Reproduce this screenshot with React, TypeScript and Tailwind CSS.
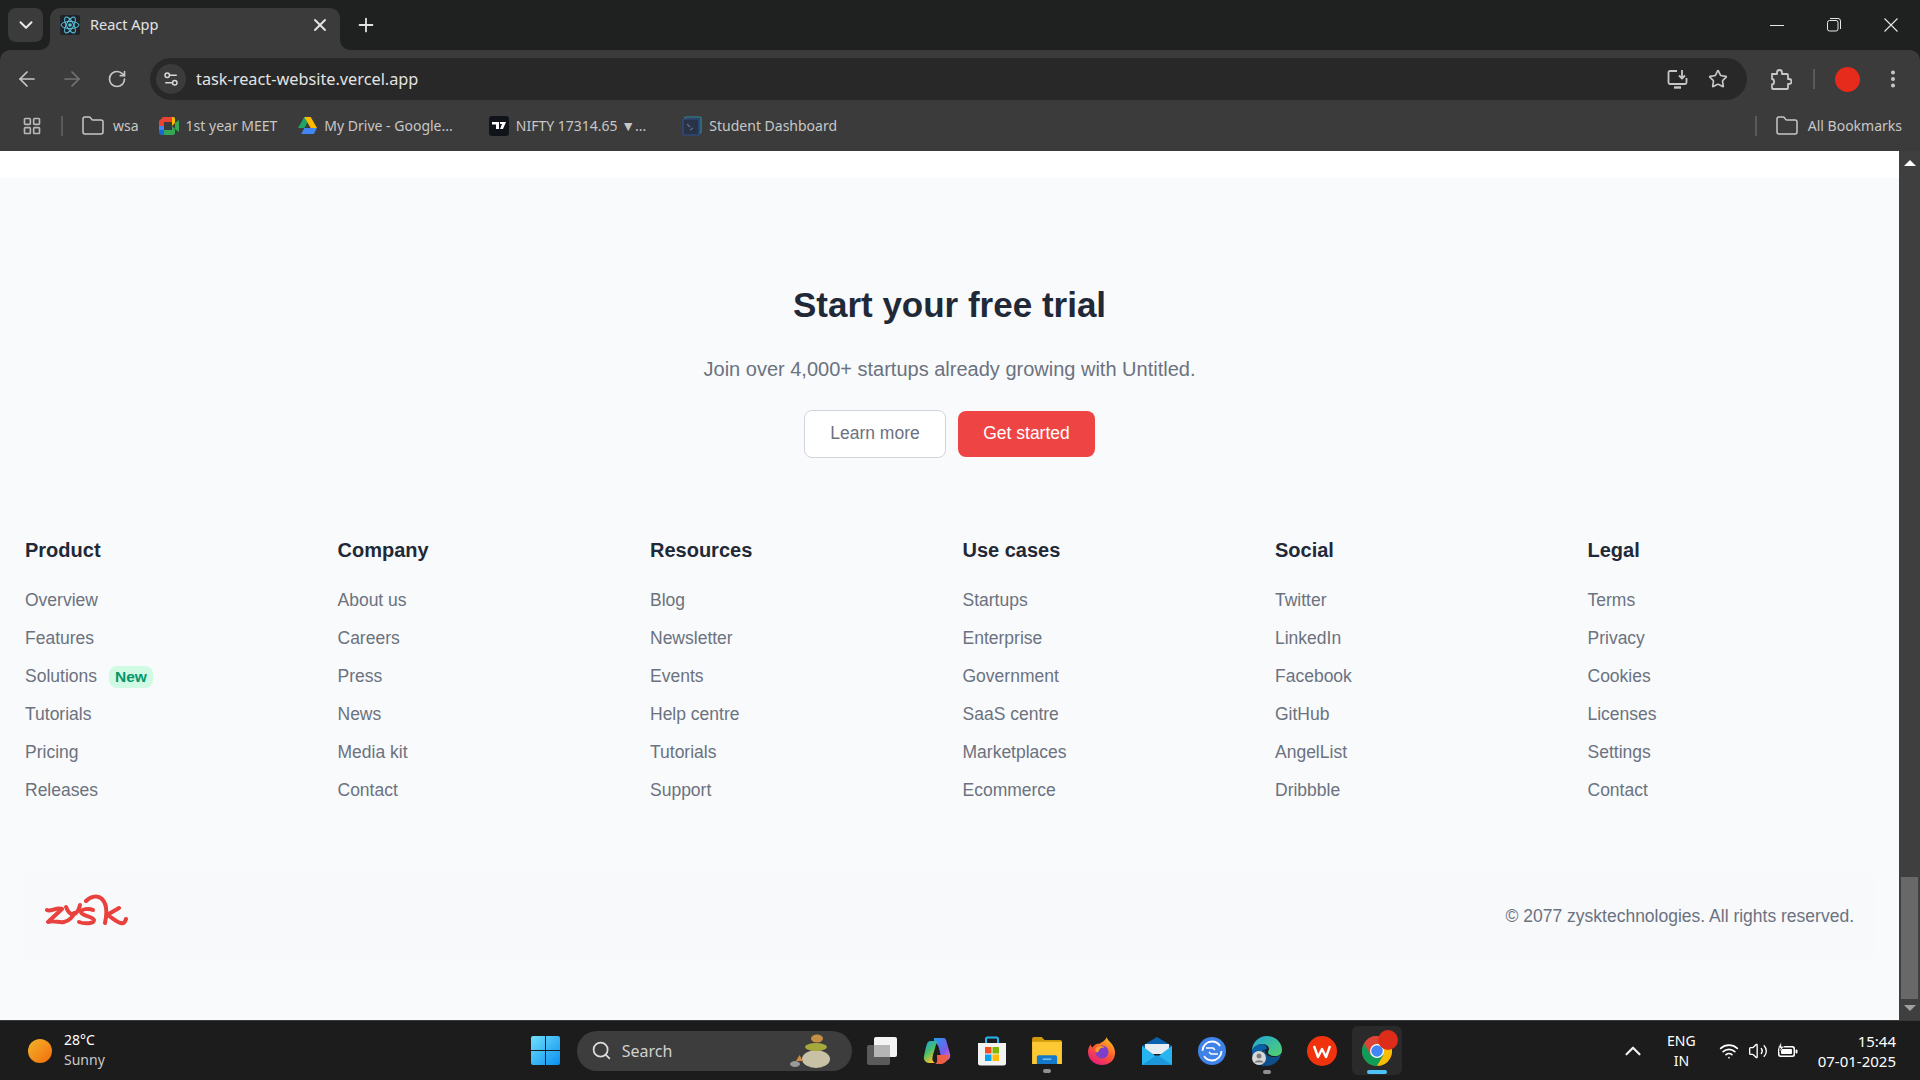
import {
  ArrowLeft,
  ArrowRight,
  ChevronDown,
  ChevronUp,
  EllipsisVertical,
  Folder,
  LayoutGrid,
  Plus,
  RotateCw,
  Search,
  Settings2,
  Star,
  Volume2,
  Wifi,
  X,
} from "lucide-react";

const columns = [
  { title: "Product", links: ["Overview", "Features", "Solutions", "Tutorials", "Pricing", "Releases"] },
  { title: "Company", links: ["About us", "Careers", "Press", "News", "Media kit", "Contact"] },
  { title: "Resources", links: ["Blog", "Newsletter", "Events", "Help centre", "Tutorials", "Support"] },
  { title: "Use cases", links: ["Startups", "Enterprise", "Government", "SaaS centre", "Marketplaces", "Ecommerce"] },
  { title: "Social", links: ["Twitter", "LinkedIn", "Facebook", "GitHub", "AngelList", "Dribbble"] },
  { title: "Legal", links: ["Terms", "Privacy", "Cookies", "Licenses", "Settings", "Contact"] },
];

function ReactIcon() {
  return (
    <svg width="20" height="20" viewBox="0 0 20 20" fill="none" stroke="#58c4dc" strokeWidth="1">
      <rect width="20" height="20" rx="2" fill="#20232a" stroke="none" />
      <circle cx="10" cy="10" r="1.8" fill="#58c4dc" stroke="none" />
      <ellipse cx="10" cy="10" rx="9" ry="3.5" />
      <ellipse cx="10" cy="10" rx="9" ry="3.5" transform="rotate(60 10 10)" />
      <ellipse cx="10" cy="10" rx="9" ry="3.5" transform="rotate(120 10 10)" />
    </svg>
  );
}

function MeetIcon() {
  return (
    <svg width="20" height="18" viewBox="0 0 20 18">
      <path d="M4 0h9v5H5v4H0V4z" fill="#ea4335" />
      <path d="M0 9h5v4H0z" fill="#4285f4" />
      <path d="M0 13h5v5H3a3 3 0 0 1-3-3z" fill="#1967d2" />
      <path d="M5 13h8v5H5z" fill="#34a853" />
      <path d="M13 0h1a2 2 0 0 1 2 2v4l-3 3z" fill="#fbbc04" />
      <path d="M13 9l3 3v4a2 2 0 0 1-2 2h-1z" fill="#34a853" />
      <path d="M16 6l4-3v12l-4-3z" fill="#34a853" />
      <path d="M5 5h8v8H5z" fill="#3b3b3b" />
    </svg>
  );
}

function DriveIcon() {
  return (
    <svg width="19" height="17" viewBox="0 0 19 17">
      <path d="M6.3 0h6.4l-6.3 11H0z" fill="#1fa463" />
      <path d="M12.7 0L19 11h-6.3L6.3 0z" fill="#ffba00" />
      <path d="M3.2 17L6.4 11H19l-3.2 6z" fill="#4285f4" />
    </svg>
  );
}

function TradingViewIcon() {
  return (
    <svg width="20" height="20" viewBox="0 0 20 20">
      <rect width="20" height="20" rx="3" fill="#10131a" />
      <path d="M3 6h7v7H7V8.5H3zM11 6h6l-3 7h-3l2-5h-2z" fill="#fff" />
    </svg>
  );
}

function StudentIcon() {
  return (
    <svg width="20" height="20" viewBox="0 0 20 20" fill="none">
      <rect x="3" y="1" width="16" height="16" rx="1" stroke="#2b8a9b" strokeWidth="1.2" />
      <rect x="1" y="3" width="16" height="16" rx="1" fill="#2a3346" stroke="#2c4f93" strokeWidth="1.2" />
      <path d="M5 8l3 3M8 14l3-2" stroke="#5b6b85" strokeWidth="1.4" />
    </svg>
  );
}

function InstallIcon() {
  return (
    <svg width="22" height="20" viewBox="0 0 22 20" fill="none" stroke="#c7c7c7" strokeWidth="1.8">
      <path d="M10 2H3a1.5 1.5 0 0 0-1.500 1.500v10A1.500 1.500 0 0 0 3 15h15a1.500 1.500 0 0 0 1.500-1.500V9" />
      <path d="M7 18.500h7" strokeWidth="2.400" />
      <path d="M15 1v8M12 6.500l3 3 3-3" />
    </svg>
  );
}

function ExtensionIcon() {
  return (
    <svg width="22" height="21" viewBox="0 0 22 21" fill="none" stroke="#c7c7c7" strokeWidth="1.800" strokeLinejoin="round">
      <path d="M2 5h5V3.500a2.500 2.500 0 0 1 5 0V5h5a1 1 0 0 1 1 1v4h1a2.500 2.500 0 0 1 0 5h-1v4a1 1 0 0 1-1 1H3a1 1 0 0 1-1-1v-3.500c2.800-.2 2.800-5.300 0-5.500z" />
    </svg>
  );
}

function WindowRestore() {
  return (
    <svg width="14" height="14" viewBox="0 0 14 14" fill="none" stroke="#e8e8e8" strokeWidth="1">
      <rect x="0.500" y="2.500" width="10.500" height="10.500" rx="2" />
      <path d="M3 .5h8a2.500 2.500 0 0 1 2.500 2.500v8" />
    </svg>
  );
}

function WindowClose() {
  return (
    <svg width="14" height="14" viewBox="0 0 14 14" fill="none" stroke="#e8e8e8" strokeWidth="1.100">
      <path d="M.5.5l13 13M13.500.5l-13 13" />
    </svg>
  );
}

function TabCorner({ flip }: { flip?: boolean }) {
  return (
    <svg width="10" height="10" viewBox="0 0 10 10" className={flip ? "absolute bottom-0 -left-[10px] -scale-x-100" : "absolute bottom-0 -right-[10px]"}>
      <path d="M0 0v10h10A10 10 0 0 1 0 0z" fill="#3b3b3b" />
    </svg>
  );
}

function ZyskLogo() {
  return (
    <svg width="84" height="32" viewBox="9 8 84 32" fill="none" stroke="#e8413e" strokeWidth="4" strokeLinecap="round" strokeLinejoin="round">
      <path d="M11 24c4 2 9-3 15-1L12 36c6-2 11 1 16 0 5-1 9-5 10-9" />
      <path d="M30 21c2 5 5 8 8 7 3-1 5-4 6-9" />
      <path d="M57 24c-4-2-12-1-12 2 0 4 12 4 13 8 0 4-10 4-15 2" />
      <path d="M50 15c5-5 12-6 16-2 5 5 5 15 3 24" />
      <path d="M83 22l-12 7c5 2 9 7 14 8 3 1 4-1 5-4" />
    </svg>
  );
}

function WindowsLogo() {
  return (
    <svg width="29" height="29" viewBox="0 0 29 29">
      <defs>
        <linearGradient id="win" x1="0" y1="0" x2="1" y2="1">
          <stop offset="0" stopColor="#6fe0fb" />
          <stop offset="1" stopColor="#0a8ff0" />
        </linearGradient>
      </defs>
      <path d="M0 2a2 2 0 0 1 2-2h12v14H0zM15 0h12a2 2 0 0 1 2 2v12H15zM0 15h14v14H2a2 2 0 0 1-2-2zM15 15h14v12a2 2 0 0 1-2 2H15z" fill="url(#win)" />
    </svg>
  );
}

function StonesIcon() {
  return (
    <svg width="42" height="36" viewBox="0 0 42 36">
      <ellipse cx="26" cy="26" rx="14" ry="9" fill="#c9c1a6" />
      <ellipse cx="26" cy="14" rx="11" ry="4" fill="#a5a83c" />
      <ellipse cx="27" cy="5.500" rx="6" ry="4" fill="#c58f45" />
      <path d="M6 28l3.500-6 3.500 6z" fill="#d1893f" />
      <ellipse cx="5" cy="31" rx="5" ry="3" fill="#9a9a9a" />
    </svg>
  );
}

function TaskView() {
  return (
    <svg width="30" height="28" viewBox="0 0 30 28">
      <rect x="0" y="8" width="23" height="20" rx="2" fill="#5a5a5a" />
      <rect x="7" y="0" width="23" height="20" rx="2" fill="#f4f4f4" />
      <rect x="7" y="8" width="16" height="12" fill="#b5b5b5" />
    </svg>
  );
}

function CopilotIcon() {
  return (
    <svg width="28" height="28" viewBox="0 0 28 28">
      <defs>
        <linearGradient id="cpa" x1="0" y1="0" x2="1" y2="1">
          <stop offset="0" stopColor="#1f9ff0" />
          <stop offset="0.600" stopColor="#7a5ae8" />
          <stop offset="1" stopColor="#e86ad0" />
        </linearGradient>
        <linearGradient id="cpb" x1="0" y1="0" x2="0.500" y2="1">
          <stop offset="0" stopColor="#1f9ff0" />
          <stop offset="0.500" stopColor="#3fbf6e" />
          <stop offset="1" stopColor="#f5c02d" />
        </linearGradient>
      </defs>
      <path d="M11 1h9c3 0 3 2 4 5l3 11c1 4-2 7-5 7h-3l-3-13c-1-3-2-5-5-5z" fill="url(#cpa)" />
      <path d="M7 4h7l-4 14c-1 4-1 6 2 8H6c-3 0-6-3-5-7l2-9c1-4 2-6 4-6z" fill="url(#cpb)" />
      <path d="M14 18h12c-1 5-4 9-8 9h-6c3-1 2-5 2-9z" fill="#ef5f45" />
      <path d="M13 11h3l-3 7h-3z" fill="#1c1c1c" />
    </svg>
  );
}

function StoreIcon() {
  return (
    <svg width="30" height="30" viewBox="0 0 30 30" fill="none">
      <path d="M9 7V3a1.500 1.500 0 0 1 1.500-1.500h9A1.500 1.500 0 0 1 21 3v4" stroke="#29b6f2" strokeWidth="2" />
      <path d="M1 7h28v20a2.500 2.500 0 0 1-2.500 2.500h-23A2.500 2.500 0 0 1 1 27z" fill="#f3f3f3" />
      <rect x="8" y="11" width="6.500" height="6.500" fill="#f25022" />
      <rect x="15.500" y="11" width="6.500" height="6.500" fill="#7fba00" />
      <rect x="8" y="18.500" width="6.500" height="6.500" fill="#00a4ef" />
      <rect x="15.500" y="18.500" width="6.500" height="6.500" fill="#ffb900" />
    </svg>
  );
}

function ExplorerIcon() {
  return (
    <svg width="30" height="27" viewBox="0 0 31 28">
      <path d="M0 2a2 2 0 0 1 2-2h8l3 3h16a2 2 0 0 1 2 2v4H0z" fill="#d19a0b" />
      <path d="M0 5h31v23H0z" fill="#fcc934" />
      <path d="M5 21a2 2 0 0 1 2-2h17a2 2 0 0 1 2 2v7H5z" fill="#1479c9" />
      <path d="M11 23h9" stroke="#7cc6f2" strokeWidth="1.500" />
    </svg>
  );
}

function FirefoxIcon() {
  return (
    <svg width="28" height="28" viewBox="0 0 30 30">
      <defs>
        <linearGradient id="ffx" x1="0.800" y1="0" x2="0.200" y2="1">
          <stop offset="0" stopColor="#ffc220" />
          <stop offset="0.500" stopColor="#ff5a2e" />
          <stop offset="1" stopColor="#e31587" />
        </linearGradient>
      </defs>
      <path d="M20 0c1 4 4 5 6 8 3 5 4 9 2 14-2 5-7 8-13 8C7 30 0 24 0 16c0-3 1-6 3-8 0 2 1 3 2 3 2-3 5-4 8-4 2-2 6-3 7-7z" fill="url(#ffx)" />
      <circle cx="15" cy="16" r="7" fill="#7c3fc9" />
      <path d="M8 12c3-3 8-3 10 0-3-1-5 0-6 2-1 1 0 3-4 2z" fill="#ff9a26" />
    </svg>
  );
}

function MailIcon() {
  return (
    <svg width="30" height="28" viewBox="0 0 30 28">
      <path d="M15 0l15 9v5H0V9z" fill="#0b63b0" />
      <path d="M3 7h24v10H3z" fill="#e8edf2" />
      <path d="M0 9l15 11L30 9v19H0z" fill="#28b4ee" />
      <path d="M0 28l15-10 15 10z" fill="#1c97da" />
    </svg>
  );
}

function SyncIcon() {
  return (
    <svg width="28" height="28" viewBox="0 0 28 28" fill="none">
      <circle cx="14" cy="14" r="14" fill="#3f83e8" />
      <circle cx="14" cy="14" r="9.500" stroke="#fff" strokeWidth="1.800" strokeDasharray="24 6" />
      <path d="M8 11h7l2 2M20 17h-7l-2-2" stroke="#fff" strokeWidth="1.600" />
    </svg>
  );
}

function EdgeIcon() {
  return (
    <svg width="30" height="30" viewBox="0 0 30 30">
      <defs>
        <linearGradient id="edg" x1="0" y1="0" x2="1" y2="1">
          <stop offset="0" stopColor="#1fa6d8" />
          <stop offset="1" stopColor="#54d16b" />
        </linearGradient>
      </defs>
      <path d="M15 0c8 0 15 6 15 14 0 4-3 6-7 6-5 0-7-2-7-4 0-1 1-2 1-3 0-3-3-5-7-5C6 8 1 12 0 15 0 7 6 0 15 0z" fill="url(#edg)" />
      <path d="M0 15c1-4 5-7 10-7 3 0 5 2 5 5-3 0-7 3-7 8 0 3 2 7 6 9C6 30 0 23 0 15z" fill="#0b5fa5" />
      <path d="M14 30c-3-2-5-5-5-9 0-3 2-6 4-7 0 4 3 7 9 7 3 0 5-1 7-3-1 6-7 12-15 12z" fill="#0c4f8c" />
      <circle cx="7" cy="22" r="7" fill="#d8d8d8" />
      <circle cx="7" cy="20" r="2.500" fill="#7b7b7b" />
      <path d="M2.500 26.500c1-3 8-3 9 0z" fill="#7b7b7b" />
    </svg>
  );
}

function WpsIcon() {
  return (
    <svg width="30" height="30" viewBox="0 0 30 30" fill="none">
      <circle cx="15" cy="15" r="15" fill="#f0330c" />
      <path d="M7 10l4 11 4-8 4 8 4-11" stroke="#fff" strokeWidth="2.400" strokeLinejoin="round" />
    </svg>
  );
}

function ChromeIcon() {
  return (
    <svg width="30" height="30" viewBox="0 0 30 30">
      <circle cx="15" cy="15" r="15" fill="#db4437" />
      <path d="M15 30a15 15 0 0 0 13-22.500H15z" fill="#fbbc04" />
      <path d="M2 7.500A15 15 0 0 0 15 30l6.500-11.250L15 7.500H2z" fill="#0f9d58" />
      <path d="M2 7.500A15 15 0 0 1 28 7.500H15l-6.500 11.250z" fill="#db4437" />
      <circle cx="15" cy="15" r="7" fill="#fff" />
      <circle cx="15" cy="15" r="5.800" fill="#4285f4" />
    </svg>
  );
}

function BatteryIcon() {
  return (
    <svg width="21" height="17" viewBox="0 0 21 17" fill="none">
      <rect x="1" y="4" width="17" height="11" rx="2.500" fill="#fff" />
      <rect x="18.500" y="7.500" width="2" height="4" rx="1" fill="#fff" />
      <rect x="2.500" y="5.500" width="14" height="8" rx="1.500" fill="#1c1c1c" />
      <rect x="4" y="7" width="11" height="5" rx="1" fill="#fff" />
      <path d="M4 0L1 6h2.500L2.500 10 7 4.500H4.500z" fill="#fff" stroke="#1c1c1c" strokeWidth="0.600" />
    </svg>
  );
}

function Bookmark({ icon, label, className }: { icon: React.ReactNode; label: string; className: string }) {
  return (
    <div className={`flex items-center gap-[7px] ${className}`}>
      {icon}
      <span>{label}</span>
    </div>
  );
}

export default function App() {
  return (
    <div className="flex h-screen w-[1920px] flex-col overflow-hidden bg-[#1f2120] font-['Liberation_Sans',sans-serif]">
      {/* Tab strip */}
      <div className="flex h-[50px] shrink-0 items-end pl-2 font-['Noto_Sans',sans-serif]">
        <div className="mb-2 flex h-[34px] w-[35px] items-center justify-center rounded-lg bg-[#3b3b3b]">
          <ChevronDown size={22} color="#e8e8e8" strokeWidth={2.200} />
        </div>
        <div className="relative ml-[7px] flex h-[42px] w-[290px] items-center rounded-t-[10px] bg-[#3b3b3b] pb-[8px] pl-[10px] pr-[10px]">
          <TabCorner flip />
          <TabCorner />
          <ReactIcon />
          <span className="ml-[10px] flex-1 text-[14.5px] text-[#e3e3e3]">React App</span>
          <X size={20} color="#e3e3e3" strokeWidth={2.400} />
        </div>
        <div className="mb-[8px] ml-[15px] flex h-[34px] items-center">
          <Plus size={22} color="#e3e3e3" strokeWidth={2} />
        </div>
        <div className="mb-2 ml-auto flex h-[34px] items-center gap-[43px] pr-[22px]">
          <div className="h-px w-[14px] bg-[#e8e8e8]" />
          <WindowRestore />
          <WindowClose />
        </div>
      </div>

      {/* Toolbar */}
      <div className="flex h-[58px] shrink-0 items-center rounded-t-[10px] bg-[#3b3b3b]">
        <div className="flex w-[150px] items-center pl-[15px]">
          <ArrowLeft size={24} color="#c7c7c7" strokeWidth={1.700} />
          <ArrowRight size={24} color="#747474" strokeWidth={1.700} className="ml-[21px]" />
          <RotateCw size={20} color="#c7c7c7" strokeWidth={2} className="ml-[23px]" />
        </div>
        <div className="flex h-[42px] w-[1597px] items-center rounded-full bg-[#282828] pl-[6px] pr-[19px]">
          <div className="flex h-[30px] w-[30px] items-center justify-center rounded-full bg-[#3b3b3b]">
            <Settings2 size={18} color="#d8d8d8" strokeWidth={2} />
          </div>
          <span className="ml-[10px] flex-1 font-['Noto_Sans',sans-serif] text-[16.3px] text-[#e3e3e3]">
            task-react-website.vercel.app
          </span>
          <div className="flex items-center gap-[19px]">
            <InstallIcon />
            <Star size={20} color="#c7c7c7" strokeWidth={2} />
          </div>
        </div>
        <div className="ml-[23px] flex items-center">
          <ExtensionIcon />
          <div className="ml-[21px] h-[20px] w-[2px] bg-[#5a5a5a]" />
          <div className="ml-[20px] h-[25px] w-[25px] rounded-full bg-[#e62a1b]" />
          <EllipsisVertical size={22} color="#c7c7c7" strokeWidth={2.400} className="ml-[22px]" />
        </div>
      </div>

      {/* Bookmarks bar */}
      <div className="flex h-[43px] shrink-0 items-center bg-[#3b3b3b] pb-[8px] font-['Noto_Sans',sans-serif] text-[14px] text-[#c7c7c7]">
        <LayoutGrid size={20} color="#b8b8b8" strokeWidth={2} className="ml-[22px]" />
        <div className="ml-[19px] h-[20px] w-[2px] bg-[#5a5a5a]" />
        <Folder size={24} color="#c7c7c7" strokeWidth={1.500} className="ml-[18px]" />
        <span className="ml-[8px]">wsa</span>
        <Bookmark icon={<MeetIcon />} label="1st year MEET" className="ml-[20px]" />
        <Bookmark icon={<DriveIcon />} label="My Drive - Google..." className="ml-[21px]" />
        <Bookmark icon={<TradingViewIcon />} label="NIFTY 17314.65 ▼..." className="ml-[36px]" />
        <Bookmark icon={<StudentIcon />} label="Student Dashboard" className="ml-[36px]" />
        <div className="ml-auto h-[20px] w-[2px] bg-[#5a5a5a]" />
        <Folder size={24} color="#c7c7c7" strokeWidth={1.500} className="ml-[18px]" />
        <span className="ml-[9px] mr-[18px]">All Bookmarks</span>
      </div>

      {/* Page + scrollbar */}
      <div className="flex min-h-0 flex-1">
        <main className="flex min-w-0 flex-1 flex-col bg-[#f9fafb]">
          <div className="h-[27px] shrink-0 bg-white" />
          <section className="flex flex-col items-center pt-[107px]">
            <h1 className="text-[35px] font-bold leading-[40px] text-[#1f2937]">Start your free trial</h1>
            <p className="mt-[30px] text-[20px] leading-[28px] text-[#6b7280]">
              Join over 4,000+ startups already growing with Untitled.
            </p>
            <div className="mt-[27px] flex items-center gap-3">
              <button className="h-[48px] w-[142px] rounded-lg border border-[#d1d5db] bg-white pb-[2px] text-[17.5px] text-[#6b7280]">
                Learn more
              </button>
              <button className="h-[46px] w-[137px] rounded-lg bg-[#ef4444] pb-[2px] text-[17.5px] text-white">
                Get started
              </button>
            </div>
          </section>

          <section className="mt-[78px] grid grid-cols-[repeat(6,312.5px)] px-[25px]">
            {columns.map((col) => (
              <div key={col.title}>
                <h3 className="text-[20px] font-bold leading-[28px] text-[#1f2937]">{col.title}</h3>
                <ul className="mt-[17px] flex flex-col">
                  {col.links.map((link) => (
                    <li key={link} className="flex h-[38px] items-center text-[17.5px] text-[#6b7280]">
                      {link}
                      {link === "Solutions" && (
                        <span className="ml-3 mt-[2px] flex h-[22px] items-center rounded-lg bg-[#d1fae5] px-[6px] text-[15.500px] font-bold text-[#059669]">
                          New
                        </span>
                      )}
                    </li>
                  ))}
                </ul>
              </div>
            ))}
          </section>

          <footer className="mx-[25px] mt-[65px] flex h-[85px] items-center justify-between bg-[#f8f9fb] pl-5 pr-[20px]">
            <div className="mb-[14px]">
              <ZyskLogo />
            </div>
            <span className="text-[17.5px] text-[#6b7280]">© 2077 zysktechnologies. All rights reserved.</span>
          </footer>
        </main>

        {/* Scrollbar */}
        <div className="flex w-[21px] shrink-0 flex-col items-center bg-[#3f3f3f]">
          <div className="mt-[9px] h-0 w-0 border-x-[6px] border-b-[6px] border-x-transparent border-b-white" />
          <div className="mt-auto h-[122px] w-[17px] bg-[#686868]" />
          <div className="mb-[9px] mt-[6px] h-0 w-0 border-x-[6px] border-t-[6px] border-x-transparent border-t-[#a0a0a0]" />
        </div>
      </div>

      {/* Taskbar */}
      <div className="flex h-[60px] shrink-0 items-center border-t border-[#3a3a3a] bg-[#1c1c1c] font-['Noto_Sans',sans-serif] text-white">
        <div className="ml-[28px] h-6 w-6 rounded-full bg-gradient-to-br from-[#f0b429] to-[#f26a0a]" />
        <div className="-mt-[2px] ml-[12px] text-[14px] leading-[20px]">
          <div>28°C</div>
          <div className="text-[#c9c9c9]">Sunny</div>
        </div>
        <div className="ml-[426px]">
          <WindowsLogo />
        </div>
        <div className="ml-[17px] flex h-10 w-[275px] items-center rounded-full bg-[#3d3d3d] pl-[14px] pr-[20px]">
          <Search size={21} color="#dcdcdc" strokeWidth={2} />
          <span className="ml-[10px] flex-1 text-[16px] text-[#d0d0d0]">Search</span>
          <StonesIcon />
        </div>
        <div className="ml-[15px]">
          <TaskView />
        </div>
        <div className="ml-[26px]">
          <CopilotIcon />
        </div>
        <div className="ml-[26px]">
          <StoreIcon />
        </div>
        <div className="relative ml-[25px]">
          <ExplorerIcon />
          <div className="absolute -bottom-[9px] left-[11px] h-[4px] w-[8px] rounded-full bg-[#8f8f8f]" />
        </div>
        <div className="ml-[26px]">
          <FirefoxIcon />
        </div>
        <div className="ml-[26px]">
          <MailIcon />
        </div>
        <div className="ml-[26px]">
          <SyncIcon />
        </div>
        <div className="relative ml-[26px]">
          <EdgeIcon />
          <div className="absolute -bottom-[8px] left-[11px] h-[4px] w-[8px] rounded-full bg-[#8f8f8f]" />
        </div>
        <div className="ml-[25px]">
          <WpsIcon />
        </div>
        <div className="relative ml-[15px] flex h-[49px] w-[50px] items-center justify-center rounded-md bg-[#2a2a2a]">
          <ChromeIcon />
          <div className="absolute right-[4px] top-[4px] h-5 w-5 rounded-full bg-[#de2c1a]" />
          <div className="absolute bottom-[1px] left-[15px] h-[4px] w-[20px] rounded-full bg-[#4cc2ff]" />
        </div>
        <ChevronUp size={26} color="#f0f0f0" strokeWidth={2} className="ml-auto" />
        <div className="ml-[21px] text-center text-[14px] leading-[20px]">
          <div>ENG</div>
          <div>IN</div>
        </div>
        <div className="ml-[23px] flex items-center gap-[9px]">
          <Wifi size={20} color="#fff" strokeWidth={2} />
          <Volume2 size={20} color="#fff" strokeWidth={1.600} />
          <BatteryIcon />
        </div>
        <div className="ml-[20px] mr-[24px] text-right text-[15px] leading-[20px]">
          <div>15:44</div>
          <div>07-01-2025</div>
        </div>
      </div>
    </div>
  );
}
